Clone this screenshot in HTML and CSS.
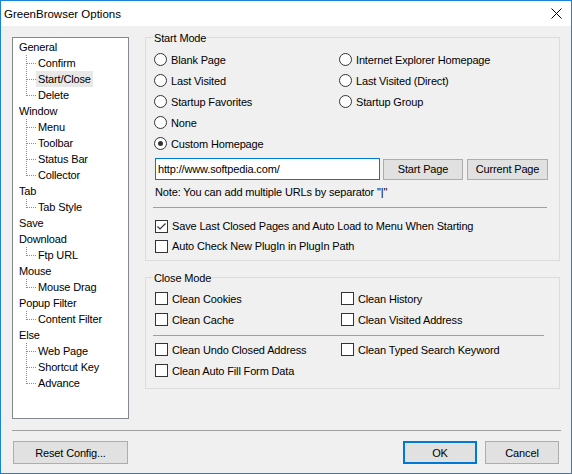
FILE: index.html
```html
<!DOCTYPE html>
<html>
<head>
<meta charset="utf-8">
<link rel="stylesheet" href="styles.css">
</head>
<body>
<div class="window">
  <div class="titlebar">
    <span class="title">GreenBrowser Options</span>
    <svg class="close" width="11" height="11" viewBox="0 0 11 11"><path d="M0.5 0.5 L10.5 10.5 M10.5 0.5 L0.5 10.5" stroke="#000" stroke-width="1" fill="none"/></svg>
  </div>
  <div class="content">
    <div class="main">
      <div class="tree">
        <div class="node">General</div>
        <div class="child"><span class="branch"></span><span class="label">Confirm</span></div>
        <div class="child"><span class="branch"></span><span class="label selected">Start/Close</span></div>
        <div class="child"><span class="branch last"></span><span class="label">Delete</span></div>
        <div class="node">Window</div>
        <div class="child"><span class="branch"></span><span class="label">Menu</span></div>
        <div class="child"><span class="branch"></span><span class="label">Toolbar</span></div>
        <div class="child"><span class="branch"></span><span class="label">Status Bar</span></div>
        <div class="child"><span class="branch last"></span><span class="label">Collector</span></div>
        <div class="node">Tab</div>
        <div class="child"><span class="branch last"></span><span class="label">Tab Style</span></div>
        <div class="node">Save</div>
        <div class="node">Download</div>
        <div class="child"><span class="branch last"></span><span class="label">Ftp URL</span></div>
        <div class="node">Mouse</div>
        <div class="child"><span class="branch last"></span><span class="label">Mouse Drag</span></div>
        <div class="node">Popup Filter</div>
        <div class="child"><span class="branch last"></span><span class="label">Content Filter</span></div>
        <div class="node">Else</div>
        <div class="child"><span class="branch"></span><span class="label">Web Page</span></div>
        <div class="child"><span class="branch"></span><span class="label">Shortcut Key</span></div>
        <div class="child"><span class="branch last"></span><span class="label">Advance</span></div>
      </div>
      <div class="panel">
        <div class="group start-group">
          <div class="group-title">Start Mode</div>
          <div class="radios">
            <div class="opt"><span class="radio"></span>Blank Page</div>
            <div class="opt"><span class="radio"></span>Internet Explorer Homepage</div>
            <div class="opt"><span class="radio"></span>Last Visited</div>
            <div class="opt"><span class="radio"></span>Last Visited (Direct)</div>
            <div class="opt"><span class="radio"></span>Startup Favorites</div>
            <div class="opt"><span class="radio"></span>Startup Group</div>
            <div class="opt"><span class="radio"></span>None</div>
            <div class="opt"></div>
            <div class="opt"><span class="radio on"><span class="dot"></span></span>Custom Homepage</div>
            <div class="opt"></div>
          </div>
          <div class="url-row">
            <div class="input">http://www.softpedia.com/</div>
            <div class="btn w80">Start Page</div>
            <div class="btn w81">Current Page</div>
          </div>
          <div class="note">Note: You can add multiple URLs by separator "|"</div>
          <div class="sep sep1"></div>
          <div class="chk-row r20"><span class="box"><svg width="11" height="11" viewBox="0 0 11 11"><path d="M1.5 5.5 L4 8 L9.5 2.5" stroke="#333" stroke-width="1.2" fill="none"/></svg></span>Save Last Closed Pages and Auto Load to Menu When Starting</div>
          <div class="chk-row r20"><span class="box"></span>Auto Check New PlugIn in PlugIn Path</div>
        </div>
        <div class="group close-group">
          <div class="group-title">Close Mode</div>
          <div class="checks first">
            <div class="opt"><span class="box"></span>Clean Cookies</div>
            <div class="opt"><span class="box"></span>Clean History</div>
            <div class="opt"><span class="box"></span>Clean Cache</div>
            <div class="opt"><span class="box"></span>Clean Visited Address</div>
          </div>
          <div class="sep sep2"></div>
          <div class="checks second">
            <div class="opt"><span class="box"></span>Clean Undo Closed Address</div>
            <div class="opt"><span class="box"></span>Clean Typed Search Keyword</div>
            <div class="opt"><span class="box"></span>Clean Auto Fill Form Data</div>
            <div class="opt"></div>
          </div>
        </div>
      </div>
    </div>
    <div class="footer-sep"></div>
    <div class="footer">
      <div class="btn reset">Reset Config...</div>
      <div class="spacer"></div>
      <div class="btn ok">OK</div>
      <div class="btn cancel">Cancel</div>
    </div>
  </div>
</div>
</body>
</html>
```
FILE: styles.css
```css
html, body {
  margin: 0;
  padding: 0;
  background: #f0f0f0;
}
body {
  font-family: "Liberation Sans", Arial, sans-serif;
  font-size: 11px;
  letter-spacing: -0.15px;
  color: #000;
}
.window {
  width: 572px;
  height: 474px;
  box-sizing: border-box;
  border: 1px solid #1883d7;
  display: flex;
  flex-direction: column;
  overflow: hidden;
}
.titlebar {
  height: 25px;
  flex: none;
  background: #fff;
  display: flex;
  align-items: center;
  padding-left: 3px;
}
.title {
  font-size: 11.5px;
  line-height: 14px;
  letter-spacing: 0;
}
.close {
  margin-left: auto;
  margin-right: 9px;
}
.content {
  flex: 1;
  background: #f0f0f0;
  padding: 11px 11px 0 11px;
  display: flex;
  flex-direction: column;
}
.main {
  display: flex;
  gap: 16px;
  height: 382px;
}
.tree {
  width: 117px;
  height: 382px;
  box-sizing: border-box;
  border: 1px solid #828790;
  background: #fff;
  padding-top: 1px;
  flex: none;
}
.node {
  height: 16px;
  line-height: 16px;
  padding-left: 6px;
}
.child {
  height: 16px;
  line-height: 16px;
  display: flex;
  padding-left: 13px;
}
.branch {
  width: 10px;
  height: 16px;
  flex: none;
  background-image:
    repeating-linear-gradient(to bottom, #8e8e8e 0 1px, transparent 1px 2px),
    repeating-linear-gradient(to right, #8e8e8e 0 1px, transparent 1px 2px);
  background-size: 1px 16px, 9px 1px;
  background-position: 0 0, 1px 8px;
  background-repeat: no-repeat;
}
.branch.last {
  background-size: 1px 9px, 9px 1px;
}
.label {
  padding: 0 2px;
}
.label.selected {
  background: #e8e8e8;
}
.panel {
  flex: 1;
  display: flex;
  flex-direction: column;
  gap: 16px;
}
.group {
  border: 1px solid #dcdcdc;
  box-sizing: border-box;
  padding-left: 8px;
}
.start-group {
  height: 224px;
}
.close-group {
  height: 112px;
}
.group-title {
  line-height: 13px;
  height: 13px;
  margin-top: -6px;
  margin-left: -1px;
  padding: 0 1px;
  background: #f0f0f0;
  width: fit-content;
}
.radios {
  display: grid;
  grid-template-columns: 185px 1fr;
  grid-auto-rows: 21px;
  margin-top: 4px;
}
.opt, .chk-row {
  display: flex;
  align-items: center;
  gap: 4px;
  white-space: nowrap;
}
.radio {
  width: 13px;
  height: 13px;
  box-sizing: border-box;
  border: 1px solid #333;
  border-radius: 50%;
  background: #fff;
  display: flex;
  align-items: center;
  justify-content: center;
  flex: none;
}
.dot {
  width: 5px;
  height: 5px;
  border-radius: 50%;
  background: #333;
}
.box {
  width: 13px;
  height: 13px;
  box-sizing: border-box;
  border: 1px solid #333;
  background: #fff;
  flex: none;
  display: flex;
  align-items: center;
  justify-content: center;
}
.url-row {
  display: flex;
  align-items: center;
  gap: 3px;
  margin-top: 4px;
  margin-left: 1px;
  height: 22px;
}
.input {
  width: 225px;
  height: 22px;
  box-sizing: border-box;
  border: 1px solid #0078d7;
  background: #fff;
  padding-left: 2px;
  line-height: 20px;
}
.btn {
  height: 21px;
  box-sizing: border-box;
  border: 1px solid #adadad;
  background: #e1e1e1;
  display: flex;
  align-items: center;
  justify-content: center;
}
.w80 { width: 80px; }
.w81 { width: 81px; margin-left: 1px; }
.note {
  margin-top: 6px;
  line-height: 13px;
  margin-left: 1px;
}
.sep {
  height: 1px;
  background: #a0a0a0;
}
.sep1 {
  margin-top: 8px;
  margin-left: -1px;
  width: 394px;
}
.chk-row {
  margin-left: 1px;
}
.r20 {
  height: 20px;
}
.sep1 + .r20 {
  margin-top: 8px;
}
.checks {
  display: grid;
  grid-template-columns: 186px 1fr;
  grid-auto-rows: 21px;
  margin-left: 1px;
}
.checks.first {
  margin-top: 3px;
}
.checks.second {
  margin-top: 3px;
}
.sep2 {
  margin-top: 5px;
  margin-left: -1px;
  width: 391px;
}
.footer-sep {
  height: 1px;
  background: #a0a0a0;
  margin-top: 11px;
  margin-right: -1px;
}
.footer {
  display: flex;
  margin-top: 10px;
  gap: 8px;
  padding-right: 1px;
}
.footer .btn {
  height: 23px;
}
.reset {
  width: 115px;
  margin-left: 1px;
}
.spacer {
  flex: 1;
}
.ok {
  width: 74px;
  border: 2px solid #0078d7 !important;
}
.cancel {
  width: 74px;
}
```
